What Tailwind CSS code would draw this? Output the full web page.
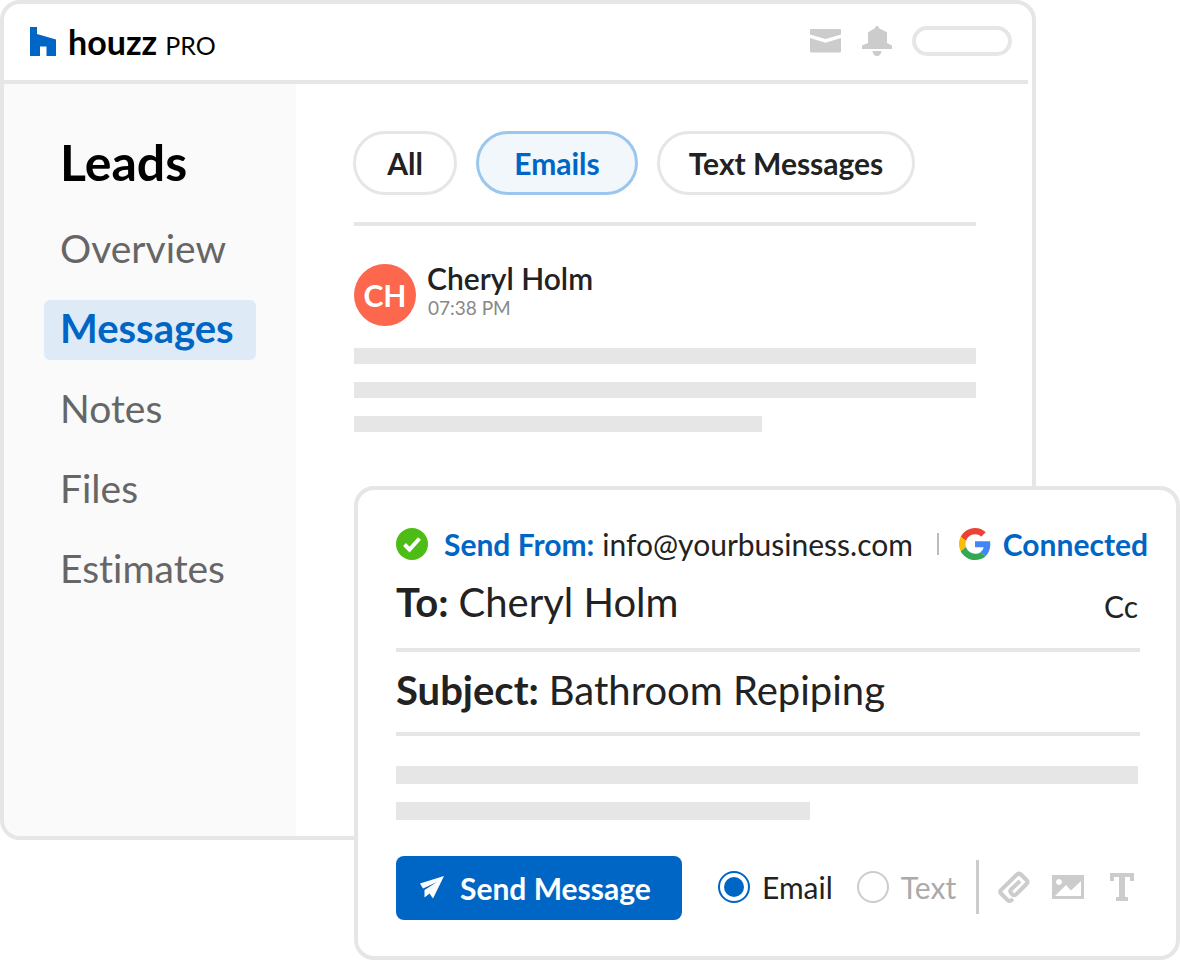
<!DOCTYPE html>
<html lang="en">
  <head>
    <meta charset="UTF-8" />
    <meta name="viewport" content="width=device-width, initial-scale=1.0" />
    <title>Leads - Messages</title>
    <script src="https://cdn.jsdelivr.net/npm/@tailwindcss/browser@4"></script>
  </head>
  <body class="bg-white font-['Lato',sans-serif] text-[#222] [font-variant-ligatures:none]">
    <div class="relative min-h-[960px]">
      <!-- App window -->
      <div class="mr-36 flex min-h-[840px] flex-col overflow-hidden rounded-[20px] border-4 border-[#e6e6e6] bg-white">
        <header class="mr-1 flex h-20 items-center justify-between border-b-4 border-[#e6e6e6] pb-[2px] pl-[26px] pr-4">
          <a href="#" class="flex items-center gap-3 text-black" aria-label="houzz PRO">
            <svg class="h-[29px] w-[26px]" viewBox="0 0 26 29" fill="#0066c5"><path d="M0 0h7v7l19 5.500V29H16.500v-9.500H10V29H0z" /></svg>
            <span class="flex items-baseline gap-2 pt-1 leading-8">
              <span class="text-[34px] font-bold">houzz</span>
              <span class="text-[25px]">PRO</span>
            </span>
          </a>
          <div class="flex items-center gap-5">
            <button type="button" aria-label="Inbox">
              <svg class="h-6 w-8" viewBox="0 0 32 24" fill="#ccc"><path d="M1 0h29q1 0 1 1v4.500L15.500 10 0 5.500V1q0-1 1-1zM0 9l15.500 4.800L31 9v13.500q0 1-1 1H1q-1 0-1-1z" /></svg>
            </button>
            <button type="button" aria-label="Notifications">
              <svg class="h-[30px] w-[30px]" viewBox="0 0 30 30" fill="#ccc"><path d="M13 2q0-2 2-2t2 2l1 .8 7 3.400V17l5 2.500V23H0v-3.500L6 17V6.200l6-3.400zM10.500 25h9q-.5 5-4.500 5t-4.500-5z" /></svg>
            </button>
            <div class="h-[30px] w-[100px] rounded-full border-4 border-[#e6e6e6]"></div>
          </div>
        </header>

        <div class="flex flex-1">
          <aside class="w-[292px] shrink-0 bg-[#fafafa] px-10 pt-12">
            <h1 class="mb-7 pl-4 text-[50px]/[60px] font-bold text-black">Leads</h1>
            <nav class="flex flex-col gap-5 text-[39px]/[56px] text-[#666]">
              <a href="#" class="pb-1 pl-4">Overview</a>
              <a href="#" class="rounded-md bg-[#deebf7] pb-1 pl-4 text-[40px]/[56px] font-bold text-[#0066c5]" aria-current="page">Messages</a>
              <a href="#" class="pb-1 pl-4">Notes</a>
              <a href="#" class="pb-1 pl-4">Files</a>
              <a href="#" class="pb-1 pl-4">Estimates</a>
            </nav>
          </aside>

          <main class="flex-1 pl-[58px] pr-14 pt-[47px]">
            <div class="-ml-px flex gap-[19px] text-[30px] font-bold">
              <button type="button" class="h-16 w-[104px] rounded-full border-3 border-[#e6e6e6]">All</button>
              <button type="button" class="h-16 w-[162px] rounded-full border-3 border-[#9bc7ee] bg-[#f2f7fc] text-[#0066c5]">Emails</button>
              <button type="button" class="h-16 w-[258px] rounded-full border-3 border-[#e6e6e6]">Text Messages</button>
            </div>
            <hr class="mt-[27px] border-t-4 border-[#e6e6e6]" />

            <article class="mt-[38px]">
              <div class="flex gap-[11px]">
                <div class="flex size-[62px] items-center justify-center rounded-full bg-[#fc674d] text-[30px] font-bold text-white">CH</div>
                <div>
                  <h2 class="text-[30px]/7 font-semibold">Cheryl Holm</h2>
                  <time class="block pl-px text-[19px]/8 text-[#888]">07:38 PM</time>
                </div>
              </div>
              <div class="mt-[22px] flex flex-col gap-[18px]">
                <div class="h-4 bg-[#e6e6e6]"></div>
                <div class="h-4 bg-[#e6e6e6]"></div>
                <div class="h-4 w-[408px] bg-[#e6e6e6]"></div>
              </div>
            </article>
          </main>
        </div>
      </div>

      <!-- Compose card -->
      <form class="absolute bottom-0 left-[354px] right-0 rounded-[20px] border-4 border-[#e6e6e6] bg-white pb-9 pl-[38px] pr-9 pt-[34px]">
        <div class="-mr-2 flex h-10 items-center whitespace-nowrap text-[30px]">
          <svg class="mr-4 size-8" viewBox="0 0 32 32"><circle cx="16" cy="16" r="16" fill="#4dbc15" /><path d="M8.500 16.500l5 5L23.500 10.500" fill="none" stroke="#fff" stroke-width="4" /></svg>
          <span class="mr-2 font-bold text-[#0066c5]">Send From:</span>
          <span>info@yourbusiness.com</span>
          <span class="ml-auto mr-5 h-[22px] w-[2px] bg-[#bbb]"></span>
          <svg class="mr-3 size-8" viewBox="0 0 48 48">
            <path fill="#ea4335" d="M24 9.500c3.540 0 6.710 1.220 9.210 3.600l6.850-6.850C35.900 2.380 30.470 0 24 0 14.620 0 6.510 5.380 2.560 13.220l7.980 6.190C12.430 13.720 17.740 9.500 24 9.500z" />
            <path fill="#4285f4" d="M46.980 24.550c0-1.570-.15-3.090-.38-4.550H24v9.020h12.940c-.58 2.960-2.260 5.480-4.780 7.180l7.730 6c4.510-4.180 7.090-10.360 7.090-17.650z" />
            <path fill="#fbbc05" d="M10.530 28.590c-.48-1.450-.76-2.990-.76-4.590s.27-3.140.76-4.590l-7.980-6.190C.92 16.460 0 20.120 0 24c0 3.880.92 7.540 2.560 10.780l7.970-6.190z" />
            <path fill="#34a853" d="M24 48c6.480 0 11.930-2.130 15.890-5.810l-7.730-6c-2.150 1.450-4.920 2.300-8.160 2.300-6.260 0-11.570-4.220-13.470-9.910l-7.980 6.190C6.510 42.620 14.620 48 24 48z" />
          </svg>
          <span class="font-bold text-[#0066c5]">Connected</span>
        </div>
        <div class="flex h-[88px] items-center gap-[10px] border-b-4 border-[#e6e6e6] pb-2 text-[40px]">
          <label for="to" class="font-bold">To:</label>
          <input id="to" type="text" value="Cheryl Holm" class="min-w-0 flex-1 outline-none" />
          <button type="button" class="mr-[2px] mt-2 text-[30px]">Cc</button>
        </div>
        <div class="flex h-[84px] items-center gap-[10px] border-b-4 border-[#e6e6e6] pb-1 text-[40px]">
          <label for="subject" class="font-bold">Subject:</label>
          <input id="subject" type="text" value="Bathroom Repiping" class="min-w-0 flex-1 outline-none" />
        </div>
        <div class="mt-[30px] flex flex-col gap-[18px]">
          <div class="mr-[2px] h-[18px] bg-[#e6e6e6]"></div>
          <div class="h-[18px] w-[414px] bg-[#e6e6e6]"></div>
        </div>
        <div class="mt-9 flex items-center text-[30px]">
          <button type="submit" class="flex h-16 w-[286px] items-center whitespace-nowrap rounded-lg bg-[#0066c5] pl-6 font-bold text-white">
            <svg class="mr-4 h-6 w-6" viewBox="0 0 24 24" fill="#fff"><path d="M24 0L13 22.500 9.500 17.500 4.500 21.500V14L17 6 3 12.500 0 7.500z" /></svg>
            Send Message
          </button>
          <label class="ml-9 flex items-center gap-3 pb-[2px]">
            <input type="radio" name="channel" checked class="size-8 appearance-none rounded-full border-2 border-[#ccc] checked:border-[#0066c5] checked:bg-[#0066c5] checked:bg-clip-content checked:p-1" />
            Email
          </label>
          <label class="ml-6 flex items-center gap-3 pb-[2px] text-[#aaa]">
            <input type="radio" name="channel" class="size-8 appearance-none rounded-full border-2 border-[#ccc] checked:border-[#0066c5] checked:bg-[#0066c5] checked:bg-clip-content checked:p-1" />
            Text
          </label>
          <div class="ml-auto flex items-center pb-[2px]">
            <span class="mr-[19px] h-[54px] w-[3px] bg-[#ccc]"></span>
            <button type="button" class="mr-[22px]" aria-label="Attach file">
              <svg class="size-8" viewBox="0 0 32 32" fill="none" stroke="#ccc" stroke-width="4"><path d="M15 28l-2 1.500q-1.500 1-3 0L3 22.500q-1.500-1.500 0-3.500L19 3.500q2-2 4 0l5.500 5.500q2 2 0 4L18 23.500q-2 1.500-3.500 0l-1.500-1.500q-1.500-2 0-3.500L22 10" /></svg>
            </button>
            <button type="button" class="mr-[26px]" aria-label="Insert image">
              <svg class="h-6 w-8" viewBox="0 0 32 24" fill="#ccc" fill-rule="evenodd"><path d="M0 0h32v24H0zM3 21h26V6L19 15.500l-5-5.500zM7 4a3 3 0 1 0 .01 0z" /></svg>
            </button>
            <button type="button" class="mr-[6px]" aria-label="Text formatting">
              <svg class="h-7 w-6" viewBox="0 0 24 28" fill="#ccc"><path d="M0 0h24v8h-4V4h-5v20h3v4H6v-4h3V4H4v4H0z" /></svg>
            </button>
          </div>
        </div>
      </form>
    </div>
  </body>
</html>
